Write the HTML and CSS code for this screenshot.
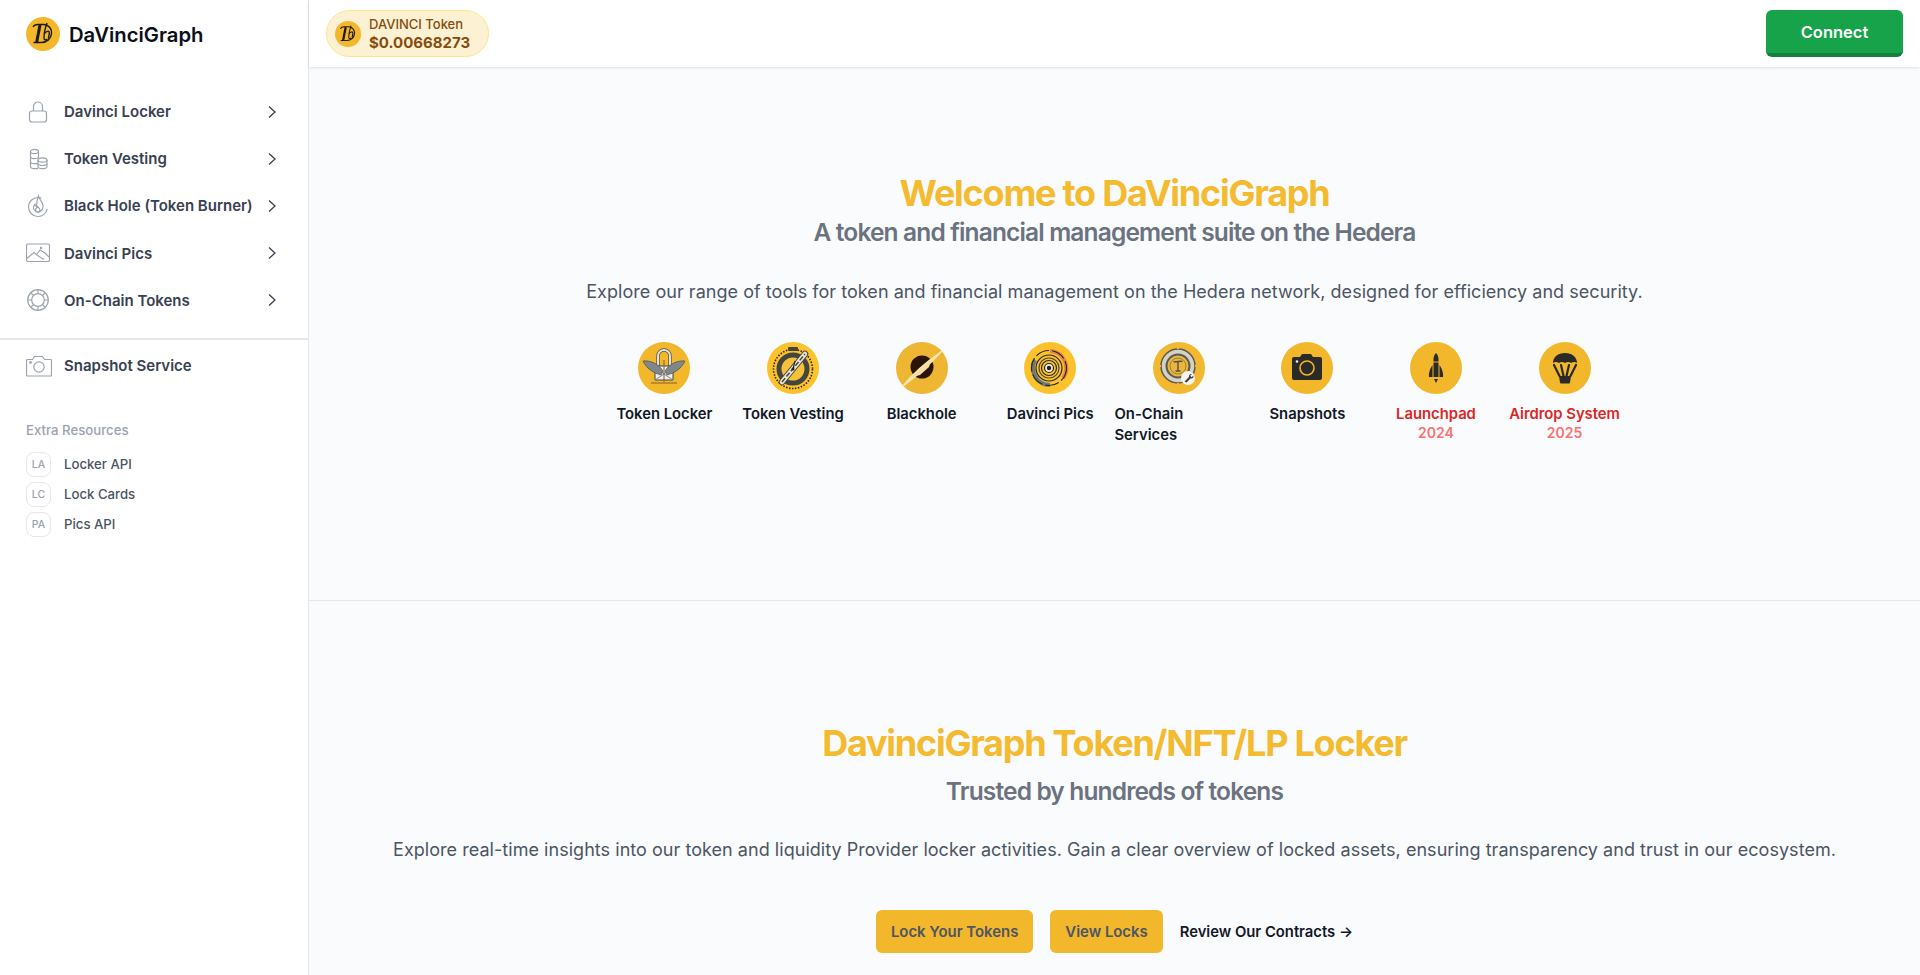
FILE: index.html
```html
<!DOCTYPE html>
<html lang="en">
<head>
<meta charset="utf-8">
<title>DaVinciGraph</title>
<link rel="stylesheet" href="styles.css">
</head>
<body>
<div class="app">
  <aside class="sidebar">
    <div class="brand">
      <svg class="brand-logo" viewBox="0 0 34 34"><circle cx="17" cy="17" r="17" fill="#f3b72c"/><g fill="none" stroke="#1f1a10"><path d="M7 10c1-2 3-2.500 5-2.500h6c5 .5 8 4.500 7.500 9-.5 5-4.500 9-10 9H7.500" stroke-width="1.500"/><path d="M14 8 10.500 26" stroke-width="3"/><path d="M21 6c-1.800 5-3 10-3 15 0 2.500 1.800 2.500 3 1" stroke-width="1.400"/><path d="M18.500 16.500c2-2.500 4.500-3 4.800-1 .2 2-1 4.500-.8 6" stroke-width="1.400"/></g></svg>
      <span class="brand-name">DaVinciGraph</span>
    </div>
    <nav class="nav">
      <a class="nav-item"><svg class="nav-icon" viewBox="0 0 24 24"><path d="M7.500 11V6.500a4.500 4.500 0 0 1 9 0V11"/><rect x="3.500" y="11" width="17" height="11" rx="2.500"/></svg><span class="nav-label">Davinci Locker</span><svg class="chev" viewBox="0 0 10 14"><path d="M2 1.500 8 7l-6 5.500"/></svg></a>
      <a class="nav-item"><svg class="nav-icon" viewBox="0 0 24 24"><ellipse cx="8.500" cy="4.500" rx="4" ry="2.200"/><path d="M4.500 4.500v15c0 1.200 1.800 2.200 4 2.200h3.500M4.500 9.500c0 1.200 1.800 2.200 4 2.200s4-1 4-2.200v-5M4.500 14.500c0 1.200 1.800 2.200 4 2.200h3.500"/><ellipse cx="16.500" cy="13" rx="4.500" ry="2.200"/><path d="M12 13v6.500c0 1.200 2 2.200 4.500 2.200s4.500-1 4.500-2.200V13M12 16.300c0 1.200 2 2.200 4.500 2.200s4.500-1 4.500-2.200"/></svg><span class="nav-label">Token Vesting</span><svg class="chev" viewBox="0 0 10 14"><path d="M2 1.500 8 7l-6 5.500"/></svg></a>
      <a class="nav-item"><svg class="nav-icon" viewBox="0 0 24 24"><circle cx="12" cy="13" r="9.500" stroke-dasharray="46 14" stroke-dashoffset="-2"/><path d="M12.500 2c.5 3.500 4 5 4.500 9.500.3 4-2.200 6.500-5 6.500-2.500 0-4.500-2-4.500-4.500 0-1.500.7-2.500 1.500-3.200 0 1.500.8 2 1.500 2 .3-3.500.5-7 2-10.300z"/><path d="M12 18c-1.500 0-2.500-1-2.500-2.200 0-1.300 1.300-2 2-3.300 1.200 1 2.500 2 2.500 3.300s-1 2.200-2 2.200z"/></svg><span class="nav-label">Black Hole (Token Burner)</span><svg class="chev" viewBox="0 0 10 14"><path d="M2 1.500 8 7l-6 5.500"/></svg></a>
      <a class="nav-item"><svg class="nav-icon" viewBox="0 0 24 24"><rect x=".5" y="3" width="23" height="17.500" rx="1.500"/><path d="M.8 17.500 8 11.500l5 4 5 3M11 13l3-4 5 3 4 4"/><circle cx="15" cy="7" r=".6"/></svg><span class="nav-label">Davinci Pics</span><svg class="chev" viewBox="0 0 10 14"><path d="M2 1.500 8 7l-6 5.500"/></svg></a>
      <a class="nav-item"><svg class="nav-icon" viewBox="0 0 24 24"><circle cx="12" cy="12" r="10.300"/><circle cx="12" cy="12" r="6.300"/><path d="M12 1.700v4M12 18.300v4M1.700 12h4M18.300 12h4M4.700 4.700l2.900 2.900M16.400 16.400l2.900 2.900M4.700 19.300l2.900-2.900M16.400 7.600l2.900-2.900"/></svg><span class="nav-label">On-Chain Tokens</span><svg class="chev" viewBox="0 0 10 14"><path d="M2 1.500 8 7l-6 5.500"/></svg></a>
    </nav>
    <a class="nav-item snapshot"><svg class="nav-icon wide" viewBox="0 0 26 22"><path d="M1.500 4.500h5L8.500 1.500h8l2 3h6a1 1 0 0 1 1 1v14.500a1 1 0 0 1-1 1h-23a1 1 0 0 1-1-1V5.500a1 1 0 0 1 1-1z"/><circle cx="13" cy="12" r="5.200"/><circle cx="4.500" cy="7.500" r=".8"/></svg><span class="nav-label">Snapshot Service</span></a>
    <div class="extra">
      <div class="extra-title">Extra Resources</div>
      <a class="extra-item"><span class="extra-badge">LA</span><span>Locker API</span></a>
      <a class="extra-item"><span class="extra-badge">LC</span><span>Lock Cards</span></a>
      <a class="extra-item"><span class="extra-badge">PA</span><span>Pics API</span></a>
    </div>
  </aside>
  <div class="main">
    <header class="topbar">
      <div class="token-pill">
        <svg class="pill-logo" viewBox="0 0 34 34"><circle cx="17" cy="17" r="17" fill="#f3b72c"/><g fill="none" stroke="#1f1a10"><path d="M7 10c1-2 3-2.500 5-2.500h6c5 .5 8 4.500 7.500 9-.5 5-4.500 9-10 9H7.500" stroke-width="1.500"/><path d="M14 8 10.500 26" stroke-width="3"/><path d="M21 6c-1.800 5-3 10-3 15 0 2.500 1.800 2.500 3 1" stroke-width="1.400"/><path d="M18.500 16.500c2-2.500 4.500-3 4.800-1 .2 2-1 4.500-.8 6" stroke-width="1.400"/></g></svg>
        <div class="pill-text"><span class="pill-name">DAVINCI Token</span><span class="pill-price">$0.00668273</span></div>
      </div>
      <button class="connect">Connect</button>
    </header>
    <section class="hero first">
      <h1 class="hero-title">Welcome to DaVinciGraph</h1>
      <h2 class="hero-sub">A token and financial management suite on the Hedera</h2>
      <p class="hero-text">Explore our range of tools for token and financial management on the Hedera network, designed for efficiency and security.</p>
      <div class="tiles">
        <a class="tile">
          <svg class="tile-icon" viewBox="0 0 52 52"><circle cx="26" cy="26" r="26" fill="#f3b72c"/><path d="M20 24V14a6 6 0 0 1 12 0v10" fill="none" stroke="#4d5256" stroke-width="3.400"/><path d="M20 24V14a6 6 0 0 1 12 0v10" fill="none" stroke="#e5e2d3" stroke-width="2"/><path d="M17 24h18v14H17z" fill="#eef0ee" stroke="#3f4448"/><path d="M17 24l9 8 9-8M17 38l9-6 9 6" fill="none" stroke="#7d858a"/><path d="M5 19c7-1 16 3 20 10l-2 4C15 31 8 26 5 19z" fill="#7f878b" stroke="#3f4448" stroke-width=".6"/><path d="M47 19c-7-1-16 3-20 10l2 4c8-2 15-7 18-14z" fill="#7f878b" stroke="#3f4448" stroke-width=".6"/><path d="M13 41h26M26 18v22" stroke="#8a5a2b" stroke-width="1"/></svg>
          <span class="tile-label">Token Locker</span>
        </a>
        <a class="tile">
          <svg class="tile-icon" viewBox="0 0 52 52"><circle cx="26" cy="26" r="26" fill="#fbc22b"/><circle cx="26" cy="27" r="19.500" fill="none" stroke="#2f2a20" stroke-width="1.600" stroke-dasharray="1.500 1.500"/><circle cx="26" cy="27" r="14" fill="#f3c23a" stroke="#45453f" stroke-width="5"/><rect x="21" y="5" width="10" height="4" rx="1" fill="#45453f"/><path d="M15 40 38 12" stroke="#45453f" stroke-width="6.500" stroke-linecap="round"/><path d="M15 40 38 12" stroke="#e9e6d6" stroke-width="4.500" stroke-linecap="round"/><path d="M15 40 38 12" stroke="#45453f" stroke-width="1.500" stroke-dasharray="5 2"/><path d="M26 27 28 19" stroke="#222" stroke-width="1.200"/><circle cx="26" cy="27" r="1.500" fill="#222"/></svg>
          <span class="tile-label">Token Vesting</span>
        </a>
        <a class="tile">
          <svg class="tile-icon" viewBox="0 0 52 52"><circle cx="26" cy="26" r="26" fill="#eeb632"/><circle cx="26" cy="25" r="11.500" fill="#2a1608"/><path d="M7 44C18 36 34 22 46 9 36 16 17 31 7 44z" fill="#fbe7b2" stroke="#fbe7b2" stroke-width="1.500"/><path d="M16 35 36 16 33 25 24 33z" fill="#f8dfa0"/></svg>
          <span class="tile-label">Blackhole</span>
        </a>
        <a class="tile">
          <svg class="tile-icon" viewBox="0 0 52 52"><circle cx="26" cy="26" r="26" fill="#fbc22b"/><path d="M26 9a17 17 0 0 1 13 27" fill="none" stroke="#e9824a" stroke-width="4"/><path d="M26 43a17 17 0 0 1-15-25" fill="none" stroke="#6c7a7c" stroke-width="4"/><g fill="none" stroke-width="1.200"><circle cx="25" cy="26" r="17.500" stroke="#2d2a20" stroke-dasharray="14 3"/><circle cx="25" cy="26" r="13" stroke="#2d2a20"/><circle cx="25" cy="26" r="10" stroke="#4f4a30"/><circle cx="25" cy="26" r="7.500" stroke="#2d2a20"/></g><circle cx="25" cy="26" r="4.500" fill="#f6f1dd" stroke="#222" stroke-width="1.200"/><circle cx="25" cy="26" r="2.200" fill="#222"/></svg>
          <span class="tile-label">Davinci Pics</span>
        </a>
        <a class="tile tile-wrap">
          <svg class="tile-icon" viewBox="0 0 52 52"><circle cx="26" cy="26" r="26" fill="#f2b830"/><circle cx="25" cy="24" r="17" fill="#d4d2c5" stroke="#5c5a50" stroke-width="1.500"/><circle cx="25" cy="24" r="11.500" fill="#e9b73f" stroke="#5c5a50" stroke-width="2"/><circle cx="25" cy="24" r="8" fill="none" stroke="#8a7030" stroke-width=".8"/><path d="M20.500 19.500c3 1 6-1 9 0M25 19.500v9M22.500 29h5" fill="none" stroke="#54504a" stroke-width="1.400"/><path d="M25 3v4M25 41v4M4 24h4M42 24h4" stroke="#f2b830" stroke-width="2"/><circle cx="35" cy="36" r="7" fill="#f4f4f2"/><path d="M31.500 39.500 36 35c-.5-2 1-3.500 3-3l-1.800 1.800 1.500 1.500 1.800-1.800c.4 2-1 3.500-3 3l-4 4z" fill="#3b3b3b"/></svg>
          <span class="tile-label">On-Chain<br>Services</span>
        </a>
        <a class="tile">
          <svg class="tile-icon" viewBox="0 0 52 52"><circle cx="26" cy="26" r="26" fill="#f3b72c"/><path d="M13 15h6l2-3h9l2 3h7a2 2 0 0 1 2 2v19a2 2 0 0 1-2 2H13a2 2 0 0 1-2-2V17a2 2 0 0 1 2-2z" fill="#2b2a27"/><circle cx="26" cy="26" r="7" fill="none" stroke="#f3b72c" stroke-width="1.600"/><circle cx="16" cy="19.500" r="1.300" fill="#f3f0dc"/></svg>
          <span class="tile-label">Snapshots</span>
        </a>
        <a class="tile">
          <svg class="tile-icon" viewBox="0 0 52 52"><circle cx="26" cy="26" r="26" fill="#f3b72c"/><path d="M26 11c1.500 1.500 2.500 4 2.500 6v2.500h-5V17c0-2 1-4.500 2.500-6z" fill="#2b2a27"/><path d="M23.500 20.500h5V35h-5z" fill="#2b2a27"/><path d="M22.500 23v12h-3.500c-.5-3 .5-8 3.500-12zM29.500 23v12H33c.5-3-.5-8-3.500-12z" fill="#2b2a27"/><path d="M24 37h4l-2 4z" fill="#2b2a27"/></svg>
          <span class="tile-label">Launchpad</span>
          <span class="tile-year">2024</span>
        </a>
        <a class="tile">
          <svg class="tile-icon" viewBox="0 0 52 52"><circle cx="26" cy="26" r="26" fill="#f3b72c"/><path d="M14 21c0-6 5-10 12-10s12 4 12 10c-2-1.500-4-1.500-6 0-2-1.500-4-1.500-6 0-2-1.500-4-1.500-6 0-2-1.500-4-1.500-6 0z" fill="#2b2a27"/><path d="M15 23l5.500 11M22 23l2.500 11M30 23l-2.500 11M37 23l-5.500 11" stroke="#2b2a27" stroke-width="2.200" stroke-linecap="round"/><path d="M20 34h12l-1 6.500a1 1 0 0 1-1 .9h-8a1 1 0 0 1-1-.9z" fill="#2b2a27"/></svg>
          <span class="tile-label">Airdrop System</span>
          <span class="tile-year">2025</span>
        </a>
      </div>
    </section>
    <section class="hero second">
      <h1 class="hero-title">DavinciGraph Token/NFT/LP Locker</h1>
      <h2 class="hero-sub">Trusted by hundreds of tokens</h2>
      <p class="hero-text">Explore real-time insights into our token and liquidity Provider locker activities. Gain a clear overview of locked assets, ensuring transparency and trust in our ecosystem.</p>
      <div class="actions">
        <a class="action-btn">Lock Your Tokens</a>
        <a class="action-btn">View Locks</a>
        <a class="action-link">Review Our Contracts →</a>
      </div>
    </section>
  </div>
</div>
</body>
</html>
```

FILE: styles.css
```css
* { box-sizing: border-box; }
html, body { margin: 0; height: 100%; overflow: hidden; }
body { font-family: Inter, "Liberation Sans", sans-serif; background: #fafbfd; color: #111827; }
.app { display: flex; height: 100vh; overflow: hidden; }

.sidebar { width: 309px; flex: none; background: #fff; border-right: 1px solid #e5e7eb; display: flex; flex-direction: column; }
.brand { display: flex; gap: 9px; padding: 17px 26px 0; height: 88px; align-items: flex-start; }
.brand-logo { width: 34px; height: 34px; flex: none; }
.brand-name { font-size: 20.250px; font-weight: 600; line-height: 36px; color: #0b0f19; }
.nav { display: flex; flex-direction: column; padding-bottom: 14px; border-bottom: 2px solid #e5e7eb; }
.nav-item { display: flex; align-items: center; height: 47.200px; padding-left: 26px; color: #374151; }
.nav-icon { width: 24px; height: 24px; flex: none; fill: none; stroke: #9ca3af; stroke-width: 1.200; margin-right: 14px; }
.nav-icon.wide { width: 26px; margin-right: 12px; }
.nav-label { font-size: 15px; font-weight: 600; flex: 1; white-space: nowrap; }
.chev { width: 10px; height: 14px; fill: none; stroke: #374151; stroke-width: 1.300; flex: none; margin-right: 31px; }
.snapshot { margin-top: 2px; }

.extra { margin-top: 31px; padding: 0 26px; display: flex; flex-direction: column; }
.extra-title { font-size: 13.200px; font-weight: 500; color: #9ca3af; line-height: 20px; margin-bottom: 9px; }
.extra-item { display: flex; align-items: center; gap: 13px; height: 30px; font-size: 13.200px; font-weight: 500; color: #4b5563; }
.extra-badge { width: 25px; height: 25px; flex: none; display: flex; align-items: center; justify-content: center; border: 1px solid #e5e7eb; border-radius: 8px; background: #fff; font-size: 10.500px; font-weight: 500; color: #9ca3af; }

.main { flex: 1; min-width: 0; display: flex; flex-direction: column; }
.topbar { height: 67px; flex: none; background: #fff; display: flex; align-items: center; justify-content: space-between; padding: 0 17px; box-shadow: 0 1px 3px rgba(0,0,0,.1); position: relative; z-index: 1; }
.token-pill { display: flex; align-items: center; gap: 8px; height: 47px; width: 163px; padding: 0 8px; background: #fdf1d3; border: 1px solid #fde68a; border-radius: 24px; }
.pill-logo { width: 26px; height: 26px; flex: none; }
.pill-text { display: flex; flex-direction: column; }
.pill-name { font-size: 13px; font-weight: 500; line-height: 18px; color: #854d0e; }
.pill-price { font-size: 15px; font-weight: 700; line-height: 20px; color: #854d0e; }
.connect { width: 137px; height: 47px; border: 0; border-bottom: 4px solid #15803d; border-radius: 6px; background: #16a34a; color: #fff; font: 600 16.500px Inter, "Liberation Sans", sans-serif; }

.hero { display: flex; flex-direction: column; align-items: center; text-align: center; }
.hero.first { height: 534px; padding-top: 106px; border-bottom: 1px solid #e5e7eb; flex: none; }
.hero.second { padding-top: 122px; }
.hero-title { margin: 0; font-size: 36px; line-height: 40px; font-weight: 700; letter-spacing: -1.250px; color: #f4bb30; }
.hero-sub { margin: 3px 0 0; font-size: 24.500px; line-height: 32px; font-weight: 600; letter-spacing: -.85px; color: #6b7280; }
.second .hero-sub { margin-top: 12px; }
.hero-text { margin: 30px 0 0; font-size: 18px; line-height: 28px; letter-spacing: .04px; color: #4b5563; }
.second .hero-text { margin-top: 29px; }
.tiles { display: grid; grid-template-columns: repeat(8, 128.600px); margin-top: 36px; }
.tile { display: flex; flex-direction: column; align-items: center; font-size: 14.800px; line-height: 21px; font-weight: 600; color: #111827; }
.tile-icon { width: 52px; height: 52px; margin-bottom: 10px; }
.tile-label { white-space: nowrap; }
.tile-wrap .tile-label { align-self: stretch; text-align: left; }
.tile:nth-child(n+7) .tile-label { color: #dc2626; }
.tile-year { font-size: 14px; line-height: 16px; font-weight: 600; color: #f87171; }
.actions { display: flex; align-items: center; gap: 17px; margin-top: 46px; }
.action-btn { height: 43px; padding: 0 15px; display: flex; align-items: center; border-radius: 6px; background: #f3b72c; font-size: 14.900px; font-weight: 600; color: #4b5563; }
.action-link { font-size: 14.800px; font-weight: 600; color: #111827; }
```
